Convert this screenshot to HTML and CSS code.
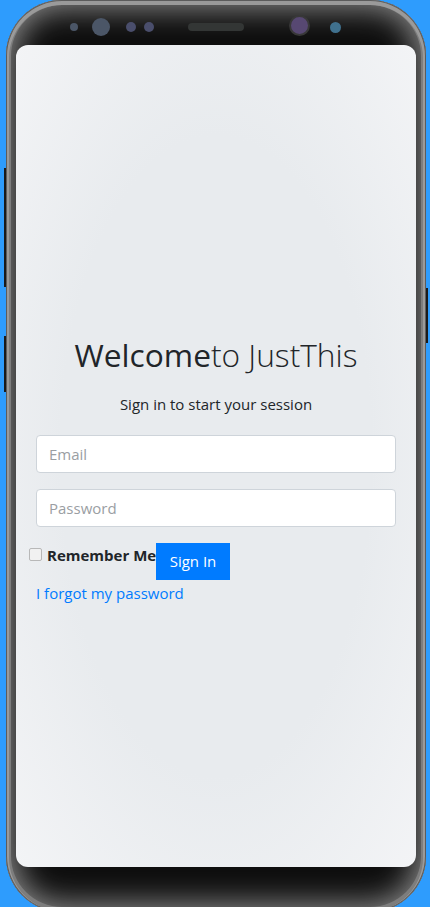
FILE: index.html
```html
<!DOCTYPE html>
<html lang="en">
<head>
<meta charset="utf-8">
<title>JustThis – Sign in</title>
<link rel="stylesheet" href="styles.css">
</head>
<body>
<div class="stage">
  <div class="side side-left">
    <span class="key key-a"></span>
    <span class="key key-b"></span>
  </div>
  <div class="device">
    <div class="topbar">
      <span class="dot dot-sm"></span>
      <span class="dot dot-lg"></span>
      <span class="dot dot-md"></span>
      <span class="dot dot-md dot-md2"></span>
      <span class="speaker"></span>
      <span class="cam"></span>
      <span class="sensor"></span>
    </div>
    <div class="screen">
      <div class="login">
        <h1 class="logo"><b>Welcome</b>to JustThis</h1>
        <p class="msg">Sign in to start your session</p>
        <form class="form">
          <input class="field" type="email" placeholder="Email">
          <input class="field" type="password" placeholder="Password">
          <div class="actions">
            <label class="remember"><input type="checkbox" class="check"><span>Remember Me</span></label>
            <button type="button" class="btn">Sign In</button>
          </div>
          <a class="forgot" href="#">I forgot my password</a>
        </form>
      </div>
    </div>
  </div>
  <div class="side side-right">
    <span class="key key-c"></span>
  </div>
</div>
</body>
</html>
```
FILE: styles.css
```css
html, body {
  margin: 0;
  padding: 0;
  height: 100%;
  overflow: hidden;
  background: #2e9cfd;
}
body {
  font-family: "Open Sans", "Noto Sans", sans-serif;
}
.stage {
  display: flex;
  width: 430px;
}
.side {
  display: flex;
  flex-direction: column;
  align-items: flex-end;
}
.side-left { width: 6px; }
.side-right { width: 4px; align-items: flex-start; }
.key {
  display: block;
  width: 2px;
  background: #1a1a1a;
}
.key-a { margin-top: 168px; height: 119px; }
.key-b { margin-top: 49px; height: 56px; }
.key-c { margin-top: 288px; height: 55px; }

.device {
  width: 420px;
  height: 912px;
  flex: none;
  border-radius: 56px;
  background: #0e0e0e;
  box-shadow:
    inset 0 0 0 1px #5c5c5c,
    inset 0 2px 0 3px #9a9a9a,
    inset 0 0 0 5px #7d7d7d,
    inset 0 0 30px 9px #8a8a8a;
  display: flex;
  flex-direction: column;
}
.topbar {
  height: 45px;
  display: flex;
  align-items: center;
  padding-top: 8px;
  box-sizing: border-box;
}
.dot {
  display: block;
  border-radius: 50%;
  background: #4b5667;
  flex: none;
}
.dot-sm { width: 8px; height: 8px; margin-left: 64px; }
.dot-lg { width: 18px; height: 18px; margin-left: 14px; }
.dot-md { width: 10px; height: 10px; margin-left: 16px; background: #4a4e6c; }
.dot-md2 { margin-left: 8px; }
.speaker {
  display: block;
  width: 56px;
  height: 8px;
  border-radius: 4px;
  background: #333635;
  margin-left: 34px;
}
.cam {
  display: block;
  width: 17px;
  height: 17px;
  border-radius: 50%;
  background: #574872;
  border: 2px solid #383838;
  margin-left: 45px;
  margin-top: -2px;
}
.sensor {
  display: block;
  width: 11px;
  height: 11px;
  border-radius: 50%;
  background: #40718e;
  margin-left: 20px;
  margin-top: 1px;
}

.screen {
  height: 822px;
  margin: 0 10px;
  border-radius: 12px;
  background: radial-gradient(ellipse at center, #e8ebee 55%, #f3f4f6 100%);
  display: flex;
  flex-direction: column;
}
.login {
  padding: 291px 20px 0;
  color: #212529;
}
.logo {
  margin: 0;
  text-align: center;
  font-size: 31.7px;
  font-weight: 300;
  line-height: 1.2;
  color: #212529;
}
.logo b { font-weight: 400; }
.msg {
  margin: 19px 0 19px;
  text-align: center;
  font-size: 15px;
  line-height: 1.5;
}
.form {
  display: flex;
  flex-direction: column;
}
.field {
  height: 38px;
  box-sizing: border-box;
  border: 1px solid #ced4da;
  border-radius: 4px;
  background: #fff;
  padding: 6px 12px;
  font-family: inherit;
  font-size: 15px;
  color: #495057;
  margin: 0 0 16px;
}
.field::placeholder { color: #9a9ea3; }
.actions {
  display: flex;
  align-items: flex-start;
  margin-left: -7px;
}
.remember {
  width: 127px;
  flex: none;
  display: flex;
  align-items: center;
  white-space: nowrap;
  font-weight: 700;
  font-size: 15px;
  margin-top: 2px;
}
.check {
  appearance: none;
  -webkit-appearance: none;
  width: 13px;
  height: 13px;
  box-sizing: border-box;
  border: 1px solid #b8b8b8;
  border-radius: 2px;
  background: #f1f1f1;
  margin: 0 5px 0 0;
  flex: none;
}
.btn {
  position: relative;
  z-index: 1;
  background: #007bff;
  color: #fff;
  border: none;
  border-radius: 0;
  height: 37px;
  width: 74px;
  font-family: inherit;
  font-size: 15px;
  padding: 0;
}
.forgot {
  margin-top: 2px;
  color: #007bff;
  text-decoration: none;
  font-size: 15px;
  line-height: 1.5;
  align-self: flex-start;
}
```
